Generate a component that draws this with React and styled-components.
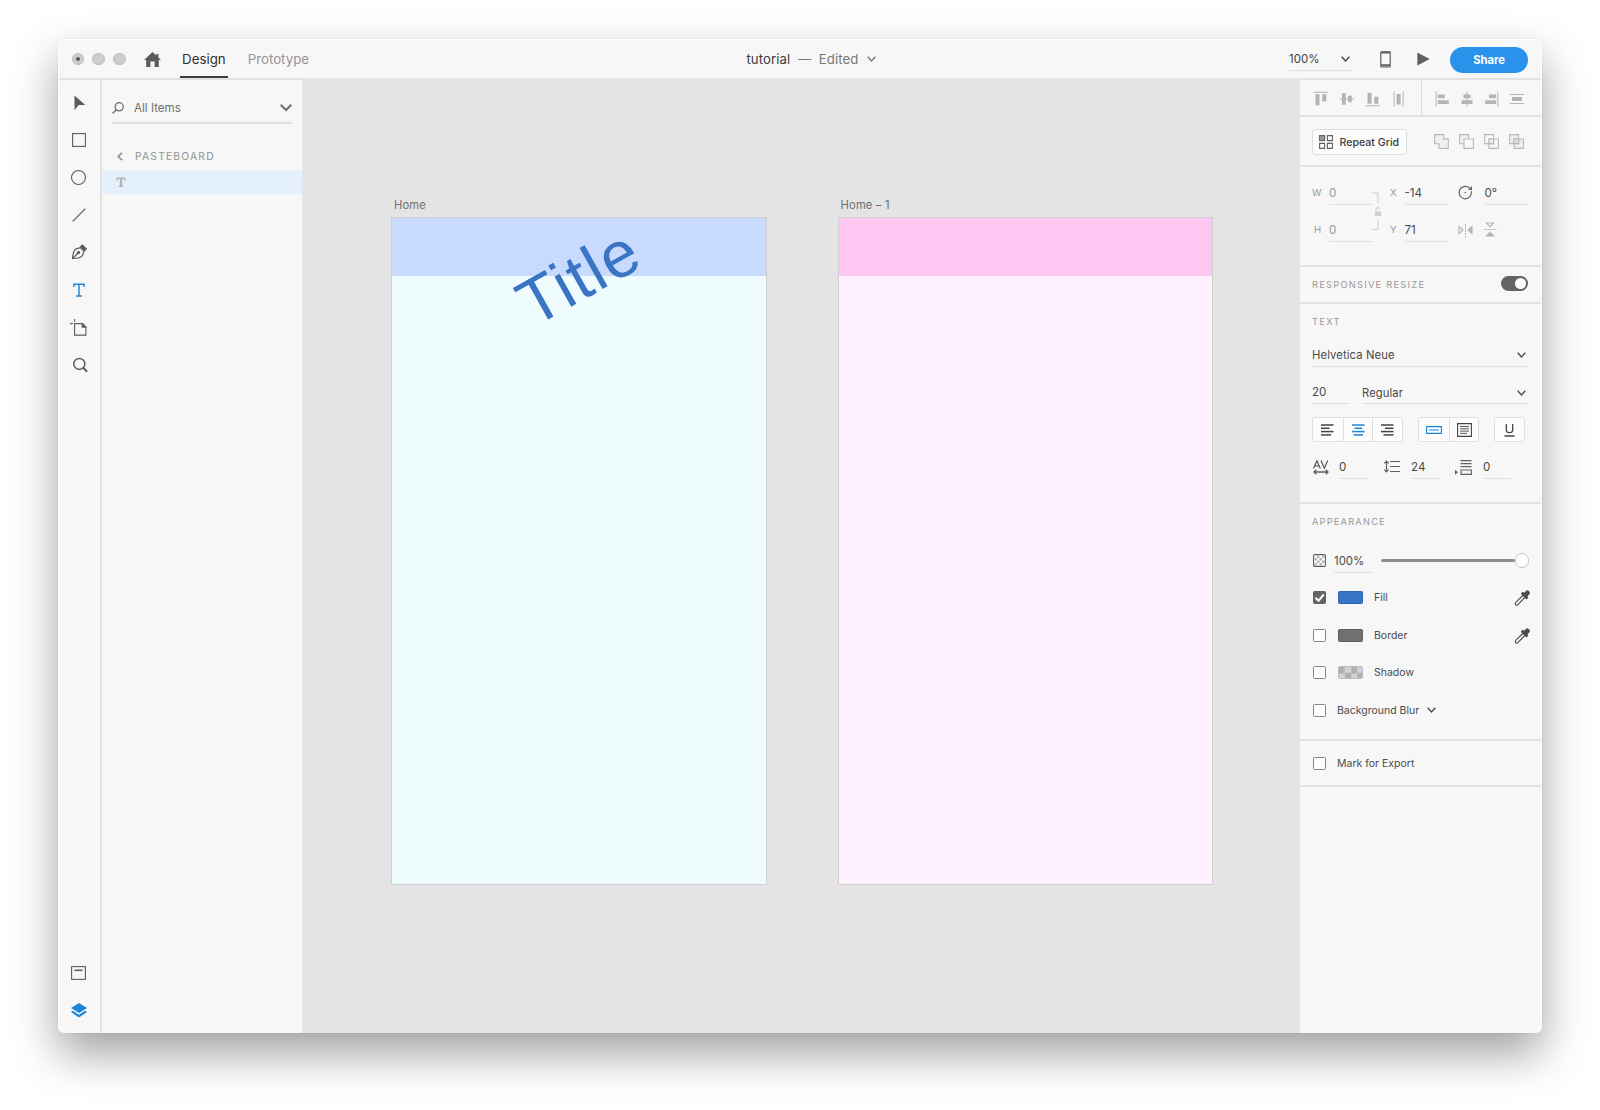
import React from "react";
import styled, { createGlobalStyle, css } from "styled-components";

const Global = createGlobalStyle`
  * { box-sizing: border-box; }
  body { margin: 0; background: #fff; font-family: Inter, Roboto, "Liberation Sans", sans-serif; color: #4b4b4b; }
  svg { display: block; flex: none; overflow: visible; }
`;

const Desktop = styled.main`
  width: 1600px;
  height: 1110px;
  padding: 39px 58px 77px;
  overflow: hidden;
`;

const Window = styled.div`
  position: relative;
  display: flex;
  flex-direction: column;
  height: 994px;
  border-radius: 6px;
  background: #f7f7f7;
  box-shadow: 0 0 1px rgba(0, 0, 0, 0.3), 0 20px 46px rgba(0, 0, 0, 0.38);

  &::after {
    content: "";
    position: absolute;
    inset: 0;
    border-radius: 6px;
    box-shadow: inset 0 1px 0 #fff, inset 1px 0 0 #fcfcfc, inset -1px 0 0 #fcfcfc;
    pointer-events: none;
  }
`;

const Header = styled.header`
  display: flex;
  align-items: stretch;
  justify-content: space-between;
  height: 39px;
`;

const HeaderSide = styled.div`
  display: flex;
  align-items: center;
`;

const Lights = styled.div`
  display: flex;
  gap: 8px;
  padding: 1px 0 0 13.5px;
`;

const Light = styled.span`
  display: grid;
  place-items: center;
  width: 12.8px;
  height: 12.8px;
  border: 1px solid #bdbdbd;
  border-radius: 50%;
  background: #cdcdcd;

  &::after {
    content: "";
    width: 4px;
    height: 4px;
    border-radius: 50%;
    background: ${(p) => (p.$dirty ? "#555" : "transparent")};
  }
`;

const HomeButton = styled.div`
  margin: 2px 18.5px 0 18.5px;
`;

const Tab = styled.div`
  align-self: stretch;
  width: ${(p) => p.$w}px;
  margin-right: 17.5px;
  padding-top: 11px;
  border-bottom: 2px solid ${(p) => (p.$active ? "#3f3f3f" : "transparent")};
  color: ${(p) => (p.$active ? "#323232" : "#959595")};
  font-size: 13.3px;
  line-height: 18px;
  text-align: center;
  white-space: nowrap;
`;

const DocTitle = styled.div`
  display: flex;
  align-items: center;
  gap: 7.5px;
  margin-left: 5px;
  color: #777;
  font-size: 13.2px;
  letter-spacing: 0.1px;

  b { color: #3c3c3c; font-weight: 400; }
  svg { margin: 1px 0 0 1.5px; }
`;

const Zoom = styled.div`
  display: flex;
  align-items: center;
  justify-content: space-between;
  width: 63px;
  height: 24px;
  margin: 1px 28px 0 0;
  padding-right: 2px;
  border-bottom: 1px solid #e0e0e0;
  font-size: 11.5px;
  color: #444;
`;

const ShareButton = styled.button`
  width: 78px;
  height: 26px;
  margin: 2px 14px 0 20.5px;
  border: 0;
  border-radius: 13px;
  background: #2993ec;
  color: #fff;
  font: 700 11.2px Inter, sans-serif;
`;

const Body = styled.div`
  display: flex;
  flex: 1;
  min-height: 0;
`;

const Rail = styled.nav`
  display: flex;
  flex-direction: column;
  justify-content: space-between;
  width: 44px;
  border-top: 2px solid #e2e2e2;
  border-right: 2px solid #e2e2e2;
`;

const ToolGroup = styled.div`
  display: flex;
  flex-direction: column;
  padding: ${(p) => (p.$bottom ? "0 0 4px" : "4px 0 0")};
`;

const Tool = styled.div`
  display: grid;
  place-items: center;
  width: 41px;
  height: 37.4px;
  color: ${(p) => (p.$active ? "#1b84dc" : "#5c5c5c")};
`;

const Layers = styled.aside`
  width: 200px;
  border-top: 2px solid #e2e2e2;
`;

const SearchRow = styled.div`
  display: flex;
  align-items: center;
  height: 33px;
  margin: 11px 10px 0;
  padding-top: 2px;
  border-bottom: 2px solid #dfdfdf;
  font-size: 11.6px;
  color: #6f6f6f;

  span { flex: 1; margin-left: 10px; }
`;

const Crumb = styled.div`
  display: flex;
  align-items: center;
  gap: 12.5px;
  height: 24px;
  margin-top: 21.5px;
  padding: 0 0 3px 14.5px;
  color: #929292;
  font-size: 10.3px;
  letter-spacing: 1.2px;
`;

const LayerRow = styled.div`
  display: flex;
  align-items: center;
  height: 24.5px;
  padding-left: 13.5px;
  background: #e4f0fb;
  color: #b3b3b3;
`;

const Canvas = styled.section`
  position: relative;
  display: flex;
  gap: 71px;
  width: 998px;
  padding: 116px 0 0 89px;
  background: #e4e4e4;
`;

const BoardColumn = styled.div`
  width: 375.6px;
`;

const BoardName = styled.div`
  height: 23px;
  padding-left: 3px;
  color: #707070;
  font-size: 11.2px;
  line-height: 22px;
  letter-spacing: 0.15px;
`;

const Board = styled.div`
  height: 667.6px;
  border: 1px solid #cfcfcf;
  background: ${(p) => p.$fill};
`;

const Band = styled.div`
  height: 58px;
  background: ${(p) => p.$fill};
`;

const TitleText = styled.div`
  position: absolute;
  left: 213px;
  top: 164px;
  color: #3a74c5;
  font: 400 65px/74px "Liberation Sans", Arial, sans-serif;
  letter-spacing: 1.7px;
  white-space: nowrap;
  transform: rotate(-29.2deg);
  transform-origin: 60.7px 37px;
`;

const Panel = styled.aside`
  width: 242px;
  border-top: 2px solid #e2e2e2;
`;

const Section = styled.section`
  height: ${(p) => p.$h}px;
  padding: ${(p) => p.$pad || "0"} 14px 0 12px;
  border-bottom: 2px solid #e2e2e2;
`;

const AlignBar = styled.div`
  display: flex;
  height: 37px;
  border-bottom: 2px solid #e2e2e2;
  color: #b4b4b4;
`;

const AlignGroup = styled.div`
  display: flex;
  align-items: center;
  gap: ${(p) => p.$gap}px;
  width: ${(p) => p.$w}px;
  padding: 3px 0 0 ${(p) => p.$pl}px;

  & + & { border-left: 1px solid #dedede; }
`;

const Row = styled.div`
  display: flex;
  align-items: center;
  justify-content: ${(p) => (p.$between ? "space-between" : "flex-start")};
  height: ${(p) => p.$h}px;
`;

const RepeatButton = styled.div`
  display: flex;
  align-items: center;
  gap: 6.5px;
  width: 95px;
  height: 26px;
  padding: 1px 0 0 6px;
  border: 1px solid #dfdfdf;
  border-radius: 3px;
  background: #fcfcfc;
  color: #3c3c3c;
  font-size: 10.6px;
  font-weight: 500;
  white-space: nowrap;

  svg { color: #606060; }
`;

const BoolIcons = styled.div`
  display: flex;
  gap: 10px;
  margin-right: 4px;
  color: #b9b9b9;
`;

const Heading = styled.h2`
  margin: 0;
  color: #999;
  font-size: 9.3px;
  font-weight: 400;
  line-height: 13px;
  letter-spacing: ${(p) => p.$ls || 1.35}px;
`;

const Caption = styled.span`
  width: ${(p) => p.$w}px;
  margin-left: ${(p) => p.$ml || 0}px;
  padding-top: 4px;
  color: #999;
  font-size: 9.6px;
`;

const Field = styled.div`
  display: flex;
  align-items: center;
  justify-content: space-between;
  width: ${(p) => p.$w}px;
  height: ${(p) => p.$h || 28}px;
  margin-left: ${(p) => p.$ml || 0}px;
  padding: ${(p) => p.$drop || 0}px 2px 0 0;
  border-bottom: 1px solid #e0e0e0;
  color: ${(p) => (p.$muted ? "#999" : "#4a4a4a")};
  font-size: ${(p) => p.$size || 11.6}px;
  letter-spacing: ${(p) => p.$ls || 0}px;
  white-space: nowrap;
`;

const Transform = styled.div`
  display: flex;
  height: 65px;
`;

const Column = styled.div`
  display: flex;
  flex-direction: column;
  justify-content: space-between;
  margin-left: ${(p) => p.$ml || 0}px;
`;

const Toggle = styled.div`
  width: 27.5px;
  height: 15px;
  margin: -2px 0 0;
  padding: 2px;
  border-radius: 8px;
  background: #646464;

  &::after {
    content: "";
    display: block;
    width: 11px;
    height: 11px;
    margin-left: 12.5px;
    border-radius: 50%;
    background: #fff;
  }
`;

const Segments = styled.div`
  display: flex;
  height: 25px;
  margin-left: ${(p) => p.$ml || 0}px;
  border: 1px solid #dfdfdf;
  border-radius: 3px;
  background: #fcfcfc;
`;

const Segment = styled.div`
  display: grid;
  place-items: center;
  width: ${(p) => p.$w || 29.7}px;
  padding-top: 1px;
  color: ${(p) => (p.$active ? "#1b84dc" : "#444")};

  & + & { border-left: 1px solid #dfdfdf; }
`;

const checker = css`
  background-color: #d2d2d2;
  background-image: conic-gradient(transparent 25%, #b0b0b0 0 50%, transparent 0 75%, #b0b0b0 0);
`;

const Checkbox = styled.span`
  display: grid;
  place-items: center;
  width: 13px;
  height: 13px;
  margin-left: 1px;
  border: 1px solid ${(p) => (p.$on ? "#606060" : "#858585")};
  border-radius: 1.5px;
  background: ${(p) => (p.$on ? "#646464" : "#fdfdfd")};
`;

const Swatch = styled.span`
  width: 25px;
  height: 13px;
  margin-left: 12px;
  border: 1px solid ${(p) => p.$edge};
  border-radius: 1.5px;
  background: ${(p) => p.$fill};
  ${(p) => p.$checker && checker}
  background-size: 12.4px 12.4px;
`;

const Label = styled.span`
  flex: 1;
  margin-left: 11px;
  font-size: 10.5px;

  svg { display: inline-block; margin-left: 8px; vertical-align: 1px; }
`;

const Slider = styled.div`
  display: flex;
  align-items: center;
  flex: 1;
  margin: 0 -1px 0 9px;

  &::before {
    content: "";
    flex: 1;
    height: 3px;
    border-radius: 2px;
    background: #8f8f8f;
  }

  &::after {
    content: "";
    width: 12.5px;
    height: 12.5px;
    border: 1px solid #c6c6c6;
    border-radius: 50%;
    background: #fff;
  }
`;

const Icon = ({ w = 16, h = 16, sw = 1.1, children }) => (
  <svg width={w} height={h} viewBox={`0 0 ${w} ${h}`} fill="none" stroke="currentColor" strokeWidth={sw}>
    {children}
  </svg>
);

const Solid = ({ w = 16, h = 16, children }) => (
  <svg width={w} height={h} viewBox={`0 0 ${w} ${h}`} fill="currentColor">
    {children}
  </svg>
);

const Chevron = ({ w = 9, h = 6, sw = 1.4 }) => (
  <Icon w={w} h={h} sw={sw}>
    <path d={`M.7 .8 L${w / 2} ${h - 1} L${w - 0.7} .8`} />
  </Icon>
);

const tools = [
  <Solid w={18} h={18}><path d="M4.5 1.5v14.8l4.2-5.3h6.6z" /></Solid>,
  <Icon w={14} h={14}><rect x=".6" y=".6" width="12.8" height="12.8" /></Icon>,
  <Icon w={15} h={15}><circle cx="7.5" cy="7.5" r="7" /></Icon>,
  <Icon w={14} h={14} sw={1.2}><path d="M.7 13.3L13.3.7" /></Icon>,
  <Icon w={16} h={16} sw={1.2}>
    <path d="M1.5 14.5C1.8 9.5 3 6 5.2 4.8L9.3 3.6l3.6 3.5-1.2 4.1C10.6 13.4 6.5 14.4 1.5 14.5zM1.7 14.3L7 9" />
    <circle cx="7.6" cy="8.5" r="1" fill="currentColor" />
    <path d="M9.6 2.6L11.3 1l4 3.9-1.6 1.8z" fill="currentColor" />
  </Icon>,
  <Icon w={12} h={14} sw={1.4}><path d="M.9 4V1.3h10.200V4M6 1.300v11.600M3.200 13h5.600" /></Icon>,
  <Icon w={17} h={17}>
    <path d="M4.6 4.6h8l3.3 3.3v8.2H4.6zM4.600 0v2.800M0 4.600h2.800" />
    <path d="M12.2 4.8v3.3h3.4z" fill="currentColor" />
  </Icon>,
  <Icon w={15} h={15} sw={1.5}><circle cx="8.3" cy="6.9" r="5.5" /><path d="M12.300 10.800l3.800 3.900" strokeWidth="2" /></Icon>,
];

const alignVertical = [
  <Solid><path d="M1 .8h14v1H1zM2.500 3.300h4v11h-4zM9.300 3.300h4v7.300h-4z" /></Solid>,
  <Solid><path d="M1 7.500h14v1H1zM3 2.200h3.800v11.600H3zM9 4.700h3.800v6.600H9z" /></Solid>,
  <Solid><path d="M1 14.200h14v1H1zM2.500 1.700h4v11h-4zM9.300 5.700h4v7h-4z" /></Solid>,
  <Solid><path d="M2.600.5h1v15h-1zM11.600.5h1v15h-1zM5.600 3h4v10.400h-4z" /></Solid>,
];

const alignHorizontal = [
  <Solid><path d="M1.600.5h1v15h-1zM3.800 3.400h7v3.800h-7zM3.800 9.300h11v3.800h-11z" /></Solid>,
  <Solid><path d="M7.500.5h1v15h-1zM4.500 3.400h7v3.800h-7zM2.500 9.300h11v3.800h-11z" /></Solid>,
  <Solid><path d="M13.400.5h1v15h-1zM5.200 3.400h7v3.800h-7zM1.200 9.300h11v3.800h-11z" /></Solid>,
  <Solid><path d="M1 3h14v1H1zM1 12h14v1H1zM3 6h10v4H3z" /></Solid>,
];

const booleans = [
  <Icon w={15} h={15}><path d="M.6.6h9v4.300h4.700v9.500H5V9.700H.6z" fill="#f0f0f0" /></Icon>,
  <Icon w={15} h={15}><path d="M5 9.700H.6V.6h9v4.300" fill="#f0f0f0" /><path d="M5 5h9.400v9.400H5z" fill="#fafafa" /></Icon>,
  <Icon w={15} h={15}><path d="M.6.6h9v9h-9zM5 5h9.400v9.400H5z" /><path d="M5 5h4.600v4.600H5z" fill="#f0f0f0" /></Icon>,
  <Icon w={15} h={15}><path d="M.6.6h9v9h-9zM5 5h9.400v9.400H5z" fill="#eeeeee" /><path d="M5 5h4.600v4.600H5z" fill="#e0e0e0" /></Icon>,
];

const DropperBox = styled.div`
  margin: 1px -1.5px 0 0;
`;

const Dropper = () => (
  <DropperBox>
    <Icon w={16} h={16}>
      <path d="M9.300 5L2 12.200c-1 1-1 1.800-.4 2.500s1.600.6 2.500-.4L11.300 7" />
      <path d="M7.600 3.700l1.200-1.200 1.600.9 1.800-2c1.400-1.300 4.100 1 2.600 2.700l-2 2 .8 1.500-1.200 1.200z" fill="currentColor" />
    </Icon>
  </DropperBox>
);

const Lines = ({ rows }) => (
  <Icon w={13} h={12} sw={1.5}>
    {rows.map(([a, b], i) => <path key={i} d={`M${a} ${1 + i * 3.3}H${b}`} />)}
  </Icon>
);

const Spacer = styled.div`
  height: ${(p) => p.$h}px;
`;

const IconCell = styled.div`
  width: ${(p) => p.$w}px;
  margin-left: ${(p) => p.$ml || 0}px;
  padding-top: ${(p) => p.$drop || 0}px;
  color: ${(p) => p.$c || "#606060"};
`;

const checks = [];
for (let r = 0; r < 4; r += 1) {
  for (let c = 0; c < 4; c += 1) {
    if ((r + c) % 2) checks.push([1.3 + c * 2.6, 1.3 + r * 2.6]);
  }
}

export default function App() {
  return (
    <Desktop>
      <Global />
      <Window>
        <Header>
          <HeaderSide>
            <Lights><Light $dirty /><Light /><Light /></Lights>
            <HomeButton>
              <svg width="17" height="15" viewBox="0 0 17 15" fill="#5c5c5c">
                <path d="M8.500 0L0 8h2.200v7h4.200V9.500h4.200V15h4.200V8H17l-2.600-2.500V2h-2.100v1.500z" />
              </svg>
            </HomeButton>
            <Tab $active $w={48}>Design</Tab>
            <Tab $w={66}>Prototype</Tab>
          </HeaderSide>
          <DocTitle><b>tutorial</b><span>—</span><span>Edited</span><Chevron /></DocTitle>
          <HeaderSide>
            <Zoom>100%<Chevron /></Zoom>
            <IconCell $drop={1}>
              <Icon w={11} h={17} sw={1.2}>
                <rect x=".8" y=".8" width="9.4" height="15.2" rx=".8" />
                <path d="M1 1.500h9M1 14.300h9" strokeWidth="2" />
              </Icon>
            </IconCell>
            <IconCell $ml={25.5} $drop={1}><Solid w={13} h={14}><path d="M.3.500v13L12.700 7z" /></Solid></IconCell>
            <ShareButton>Share</ShareButton>
          </HeaderSide>
        </Header>

        <Body>
          <Rail>
            <ToolGroup>
              {tools.map((t, i) => <Tool key={i} $active={i === 5}>{t}</Tool>)}
            </ToolGroup>
            <ToolGroup $bottom>
              <Tool><Icon w={15} h={14}><rect x=".6" y=".6" width="13.8" height="12.8" /><path d="M3.500 4.300h8" strokeWidth="1.600" /></Icon></Tool>
              <Tool $active>
                <Solid w={16} h={15}><path d="M8 0l8 5-8 5-8-5zM0 9l1.900-1.200L8 11.700l6.100-3.900L16 9l-8 5.500z" /></Solid>
              </Tool>
            </ToolGroup>
          </Rail>

          <Layers>
            <SearchRow>
              <Icon w={12} h={12} sw={1.3}><circle cx="7.2" cy="4.8" r="4.1" /><path d="M4.300 7.700L.5 11.500" /></Icon>
              <span>All Items</span>
              <Chevron w={12} h={7} sw={2} />
            </SearchRow>
            <Crumb>
              <Icon w={6} h={9} sw={1.7}><path d="M5 .8L1.200 4.500 5 8.200" /></Icon>
              PASTEBOARD
            </Crumb>
            <LayerRow>
              <Icon w={10} h={10} sw={1.5}><path d="M1.300 3.600V1.200h7.400v2.400M3 9.200h4" /><path d="M5 1.200v7.900" strokeWidth="2.200" /></Icon>
            </LayerRow>
          </Layers>

          <Canvas>
            <BoardColumn>
              <BoardName>Home</BoardName>
              <Board $fill="#effcfd"><Band $fill="#c8dafd" /></Board>
            </BoardColumn>
            <BoardColumn>
              <BoardName>Home – 1</BoardName>
              <Board $fill="#fef0fe"><Band $fill="#fec7f1" /></Board>
            </BoardColumn>
            <TitleText>Title</TitleText>
          </Canvas>

          <Panel>
            <AlignBar>
              <AlignGroup $w={121} $gap={10.3} $pl={12.5}>{alignVertical.map((n, i) => <React.Fragment key={i}>{n}</React.Fragment>)}</AlignGroup>
              <AlignGroup $w={121} $gap={9} $pl={12}>{alignHorizontal.map((n, i) => <React.Fragment key={i}>{n}</React.Fragment>)}</AlignGroup>
            </AlignBar>

            <Section $h={50}>
              <Row $h={49} $between>
                <RepeatButton>
                  <Icon w={14} h={14}>
                    <rect x=".6" y=".6" width="5" height="5" fill="#999" />
                    <path d="M8.400.6h5v5h-5zM.6 8.400h5v5h-5zM8.400 8.400h5v5h-5z" />
                  </Icon>
                  Repeat Grid
                </RepeatButton>
                <BoolIcons>{booleans.map((n, i) => <React.Fragment key={i}>{n}</React.Fragment>)}</BoolIcons>
              </Row>
            </Section>

            <Section $h={100} $pad="9.5px">
              <Transform>
                <Column>
                  <Row $h={28}><Caption $w={17}>W</Caption><Field $w={43} $drop={5} $muted>0</Field></Row>
                  <Row $h={28}><Caption $w={15} $ml={2}>H</Caption><Field $w={43} $drop={5} $muted>0</Field></Row>
                </Column>
                <IconCell $w={10} $c="#cfcfcf">
                  <Icon w={10} h={66}>
                    <path d="M0 16h6v9.500M6 43v9.500H0" />
                    <rect x="3" y="34.5" width="6" height="4.5" fill="currentColor" stroke="none" />
                    <path d="M4 34.500v-2.200a1.700 1.700 0 0 1 3.400 0" />
                  </Icon>
                </IconCell>
                <Column $ml={8}>
                  <Row $h={28}><Caption $w={14.5}>X</Caption><Field $w={43.5} $drop={5}>-14</Field></Row>
                  <Row $h={28}><Caption $w={14.5}>Y</Caption><Field $w={43.5} $drop={5}>71</Field></Row>
                </Column>
                <Column $ml={9.5}>
                  <Row $h={28}>
                    <IconCell $drop={4}>
                      <Icon w={15} h={15} sw={1.2}>
                        <path d="M13.300 6.200A6.200 6.200 0 1 1 11.400 3" />
                        <path d="M10 5h4V1z" fill="currentColor" stroke="none" />
                        <circle cx="7.3" cy="7.5" r=".8" fill="currentColor" stroke="none" />
                      </Icon>
                    </IconCell>
                    <Field $w={43.5} $ml={12} $drop={5}>0°</Field>
                  </Row>
                  <Row $h={28}>
                    <IconCell $c="#b4b4b4" $drop={4}>
                      <Icon w={15} h={14}>
                        <path d="M1 3.500v7L5 7z" />
                        <path d="M7.500 1v13" strokeDasharray="2 1" strokeWidth="1" />
                        <path d="M14 3.500v7L10 7z" fill="currentColor" />
                      </Icon>
                    </IconCell>
                    <IconCell $ml={11} $c="#b4b4b4" $drop={4}>
                      <Icon w={13} h={15}>
                        <path d="M2.500 1h7L6 4.600z" />
                        <path d="M0 7.500h12.500" strokeDasharray="1.500 .7" strokeWidth="1" />
                        <path d="M2.500 14h7L6 10.400z" fill="currentColor" />
                      </Icon>
                    </IconCell>
                  </Row>
                </Column>
              </Transform>
            </Section>

            <Section $h={37}>
              <Row $h={35} $between><Heading $ls={1.24}>RESPONSIVE RESIZE</Heading><Toggle /></Row>
            </Section>

            <Section $h={200} $pad="11px">
              <Heading>TEXT</Heading>
              <Spacer $h={10.5} />
              <Row $h={28}><Field $w={216} $drop={6} $size={11.3} $ls={0.1}>Helvetica Neue<Chevron /></Field></Row>
              <Spacer $h={9.5} />
              <Row $h={28}>
                <Field $w={38} $drop={4}>20</Field>
                <Field $w={166} $ml={12} $drop={6} $size={11.2} $ls={0.1}>Regular<Chevron /></Field>
              </Row>
              <Spacer $h={13} />
              <Row $h={25}>
                <Segments>
                  <Segment><Lines rows={[[0, 12.5], [0, 8.5], [0, 12.5], [0, 10]]} /></Segment>
                  <Segment $active><Lines rows={[[0, 12.5], [2.5, 10], [0, 12.5], [1.5, 11]]} /></Segment>
                  <Segment><Lines rows={[[0, 12.5], [4, 12.5], [0, 12.5], [2.5, 12.5]]} /></Segment>
                </Segments>
                <Segments $ml={15}>
                  <Segment $active><Icon w={16} h={8}><path d="M.6.6h14.800v6.800H.6zM3 4h10" /></Icon></Segment>
                  <Segment><Icon w={15} h={14}><path d="M.6.6h13.800v12.800H.6z" /><path d="M3 3.500h9M3 5.800h9M3 8.100h9M3 10.400h7" strokeWidth=".9" /></Icon></Segment>
                </Segments>
                <Segments $ml={15}>
                  <Segment $w={29}><Icon w={11} h={13} sw={1.3}><path d="M2.300 0v5.500a3.200 3.200 0 0 0 6.400 0V0M.5 12h10" /></Icon></Segment>
                </Segments>
              </Row>
              <Spacer $h={9} />
              <Row $h={28}>
                <IconCell $w={26} $ml={1} $drop={4}>
                  <Icon w={16} h={15} sw={1.3}>
                    <path d="M.5 8.500L3.900.8l3.400 7.700M1.700 5.900h4.400M8 .5l3.300 7.700L14.700.5M1 12h14M3.300 9.700L1 12l2.300 2.300M12.700 9.700L15 12l-2.300 2.300" />
                  </Icon>
                </IconCell>
                <Field $w={29} $drop={4}>0</Field>
                <IconCell $w={27} $ml={16} $drop={3}>
                  <Icon w={16} h={13} sw={1.2}>
                    <path d="M6 1.500h10M6 6.500h10M6 11.500h10M2.500 1v11M.3 3.300L2.500 1l2.200 2.300M.3 9.700L2.500 12l2.200-2.300" />
                  </Icon>
                </IconCell>
                <Field $w={29} $drop={4}>24</Field>
                <IconCell $w={28} $ml={15} $drop={4}>
                  <Icon w={17} h={15}>
                    <path d="M5.500.6h11M5.500 3.600h11M5.500 6.600h11M6 10h10.400v4.400H6z" />
                    <path d="M0 9.800v5L3 12.300z" fill="currentColor" stroke="none" />
                  </Icon>
                </IconCell>
                <Field $w={28} $drop={4}>0</Field>
              </Row>
            </Section>

            <Section $h={237} $pad="11px">
              <Heading $ls={1.18}>APPEARANCE</Heading>
              <Spacer $h={14} />
              <Row $h={37}>
                <IconCell $w={21} $ml={1}>
                  <Icon w={13} h={13}>
                    <rect x=".6" y=".6" width="11.8" height="11.8" rx="1" fill="#fff" />
                    {checks.map(([x, y]) => (
                      <rect key={`${x}-${y}`} x={x} y={y} width="2.6" height="2.6" fill="#b5b5b5" stroke="none" />
                    ))}
                  </Icon>
                </IconCell>
                <Field $w={38} $h={24} $drop={1} $size={11.4}>100%</Field>
                <Slider />
              </Row>
              <Row $h={37.5}>
                <Checkbox $on><Icon w={11} h={10} sw={2}><g stroke="#fff"><path d="M1.500 4.800l3 3L9.700 1.500" /></g></Icon></Checkbox>
                <Swatch $fill="#3a74c5" $edge="#2c63b4" /><Label>Fill</Label><Dropper />
              </Row>
              <Row $h={37.5}>
                <Checkbox /><Swatch $fill="#707070" $edge="#5f5f5f" /><Label>Border</Label><Dropper />
              </Row>
              <Row $h={37.5}>
                <Checkbox /><Swatch $checker $edge="#bcbcbc" /><Label>Shadow</Label>
              </Row>
              <Row $h={37.5}>
                <Checkbox /><Label>Background Blur<Chevron /></Label>
              </Row>
            </Section>

            <Section $h={46}>
              <Row $h={44}><Checkbox /><Label>Mark for Export</Label></Row>
            </Section>
          </Panel>
        </Body>
      </Window>
    </Desktop>
  );
}
